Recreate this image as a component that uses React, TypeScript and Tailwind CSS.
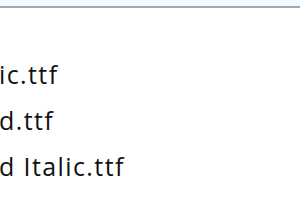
export default function App() {
  const rows = ['ic.ttf', 'd.ttf', 'd Italic.ttf'];
  return (
    <div className="w-[300px] h-[200px] overflow-hidden bg-white" style={{ fontFamily: '"Open Sans", "Noto Sans", sans-serif' }}>
      <div className="h-[6px] bg-[#effaff]" />
      <div className="h-[2px] bg-[#a4a8ac]" />
      <div className="flex flex-col pt-[43px] -ml-[1px]">
        {rows.map((r) => (
          <div key={r} className="h-[46px] leading-[46px] text-[25px] tracking-[1.4px] text-[#111111] whitespace-nowrap">
            {r}
          </div>
        ))}
      </div>
    </div>
  );
}
